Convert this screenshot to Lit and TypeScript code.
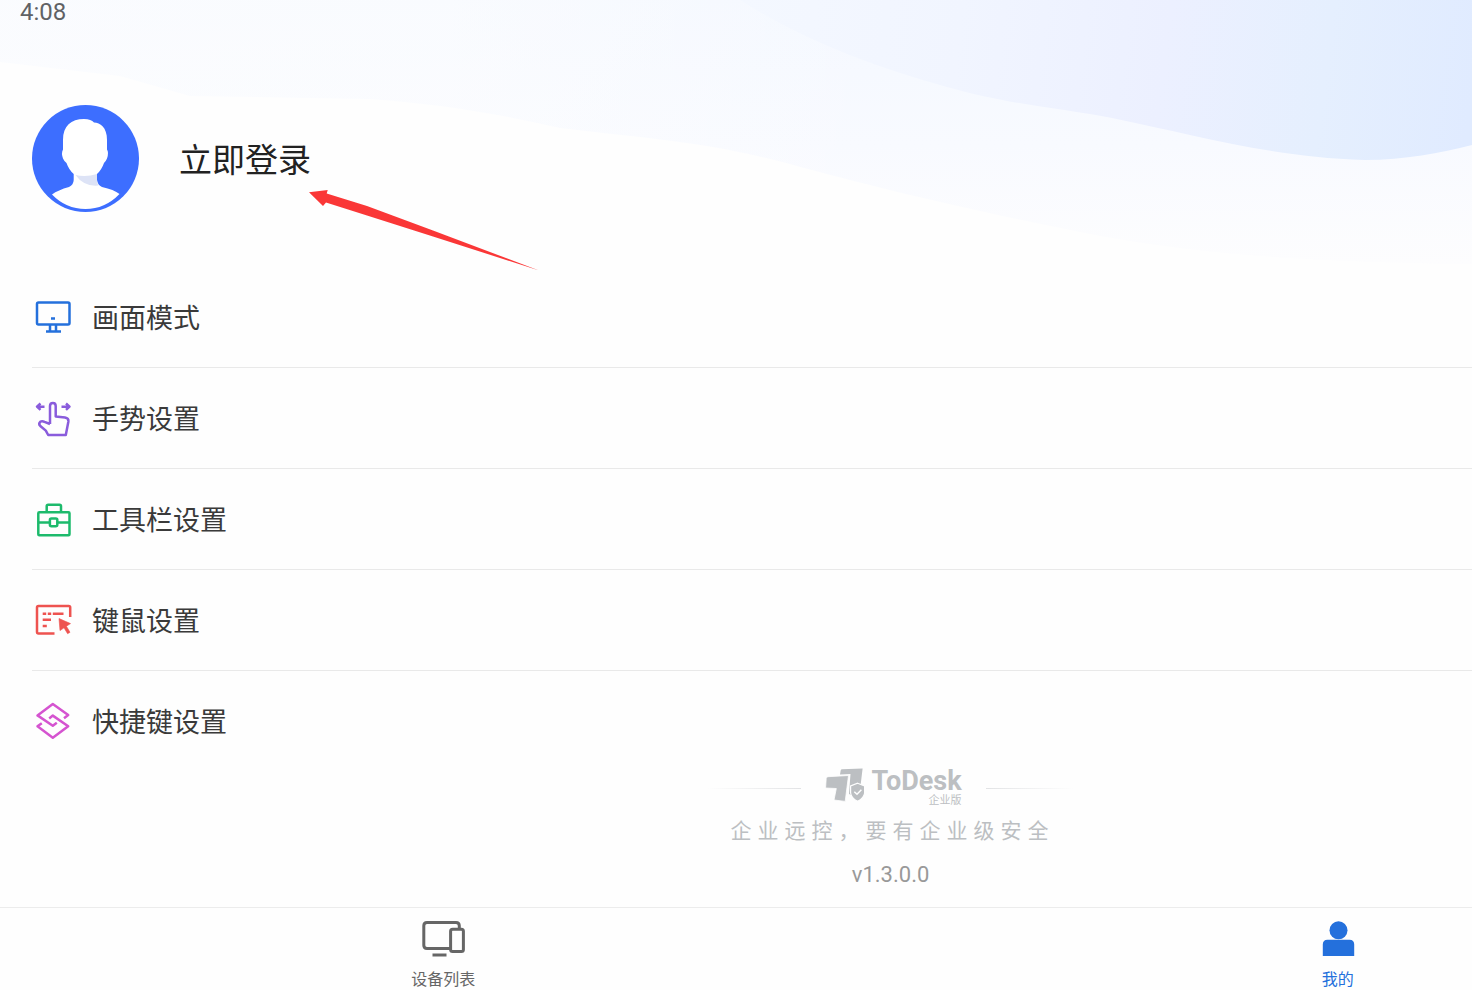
import { LitElement, html, css, svg } from "lit";
import { customElement, state } from "lit/decorators.js";

const menuItems = [
  {
    label: "画面模式",
    color: "#2470dc",
    icon: svg`<rect x="5" y="6.5" width="32.5" height="22" rx="1.5"/>
      <path d="M18 28.5V35M24 28.5V35M14 35.5H29M19 22.5H23"/>`,
  },
  {
    label: "手势设置",
    color: "#8a5cdc",
    icon: svg`<path d="M12.5 9.7H5.5M8.500 6.500L5 9.7L8.500 12.900M29.5 9.7H37M34 6.500L37.5 9.7L34 12.900"/>
      <path d="M18 27V9Q18 6 20.9 6Q23.7 6 23.7 9V19.5L33 20.6Q36.8 21.2 36.4 24.5L33.8 38H16.2L13.8 33.6L8.3 29Q6.2 26.7 8.2 24.8Q10 23.6 12.5 24.8L18 27"/>`,
  },
  {
    label: "工具栏设置",
    color: "#1dba6c",
    icon: svg`<rect x="6.3" y="14.3" width="31.2" height="23" rx="1"/>
      <path d="M14.7 14V8.2Q14.7 6.7 16.2 6.7H27.5Q29 6.7 29 8.2V14M6.3 24.5H17.7M25.3 24.5H37.5"/>
      <rect x="17.9" y="20.5" width="7.4" height="7.8" rx="1.5"/>`,
  },
  {
    label: "键鼠设置",
    color: "#ee5350",
    icon: svg`<path d="M38.2 18V8.5Q38.2 7 36.7 7H6.5Q5 7 5 8.5V33Q5 34.5 6.5 34.5H22.5M10.7 14.7H14.2M15.8 14.7H19.2M20.8 14.7H31.5M10.7 20.7H19M10.7 27H14.8"/>
      <path d="M27 19.5L38.5 24.6L34.4 27.2L38 33.3L35.6 34.7L32 28.8L28 31.6Z" fill="currentColor" stroke-width="0.6"/>`,
  },
  {
    label: "快捷键设置",
    color: "#d554d0",
    icon: svg`<path d="M32 18.2L36.2 15L20.8 4L5.5 15.4L20.8 25.8L24.8 22.8"/>
      <path d="M9.8 23.2L5.5 26.3L20.8 37.8L36.2 26.3L20.8 15.6L17.2 18.4"/>`,
  },
];

@customElement("app-root")
export class AppRoot extends LitElement {
  static styles = css`
    :host {
      display: block;
      position: relative;
      overflow: hidden;
      min-height: 100vh;
      background: #fefefe;
      font-family: Roboto, "Noto Sans CJK SC", sans-serif;
      color: #333;
    }
    * {
      box-sizing: border-box;
    }
    button {
      margin: 0;
      padding: 0;
      border: 0;
      background: none;
      font: inherit;
      color: inherit;
      text-align: left;
      cursor: pointer;
    }
    svg {
      display: block;
      flex: none;
    }
    .waves {
      position: absolute;
      top: 0;
      left: 0;
      width: 100%;
      height: 270px;
    }
    .screen {
      position: relative;
      display: flex;
      flex-direction: column;
      width: 121%;
      min-height: 100vh;
    }
    .status {
      padding-left: 20px;
      font-size: 24px;
      line-height: 24px;
      color: #606265;
    }
    .profile {
      padding: 81px 32px 55px;
    }
    .login {
      position: relative;
      display: flex;
      align-items: center;
      gap: 40px;
      font-size: 33px;
      line-height: 48px;
      color: #222;
    }
    .login-label {
      padding-top: 5px;
    }
    .pointer {
      position: absolute;
      left: 276px;
      top: 84px;
    }
    .menu {
      margin: 0;
      padding: 0 0 0 32px;
      list-style: none;
    }
    .menu li + li {
      border-top: 1px solid #e9e9e9;
    }
    .row {
      display: flex;
      align-items: center;
      gap: 18px;
      width: 100%;
      padding: 29px 0;
      font-size: 27px;
      line-height: 38px;
    }
    .menu li:last-child .row {
      padding-bottom: 0;
    }
    .row svg {
      fill: none;
      stroke: currentColor;
      stroke-width: 2.5;
      stroke-linejoin: round;
    }
    .row-label {
      padding-top: 4px;
      color: #3a3a3a;
    }
    .about {
      display: flex;
      flex-direction: column;
      align-items: center;
      margin-top: auto;
      padding: 20px 0 19px;
      color: #bcbfc2;
    }
    .brand {
      display: flex;
      align-items: center;
      gap: 24px;
    }
    .rule {
      width: 94px;
      height: 1px;
      background: linear-gradient(90deg, transparent, #e2e3e5);
    }
    .rule.end {
      width: 88px;
      background: linear-gradient(270deg, transparent, #e2e3e5);
    }
    .logo {
      display: flex;
      align-items: flex-start;
      gap: 6px;
    }
    .name {
      display: flex;
      flex-direction: column;
      align-items: flex-end;
    }
    .product {
      font-size: 27px;
      line-height: 26px;
      font-weight: 700;
    }
    .edition {
      font-size: 11px;
      line-height: 14px;
    }
    .tagline {
      margin: 8px 0 16px;
      font-size: 21px;
      line-height: 30px;
      letter-spacing: 6px;
      text-indent: 4px;
    }
    .version {
      font-size: 22px;
      line-height: 26px;
      color: #999;
    }
    .tabs {
      display: grid;
      grid-template-columns: 1fr 1fr;
      gap: 8px;
      padding-top: 11px;
      border-top: 1px solid #ececec;
    }
    .tab {
      display: flex;
      flex-direction: column;
      align-items: center;
      gap: 10px;
      font-size: 16px;
      line-height: 21px;
      color: #666;
    }
    .tab.active {
      color: #2470dc;
    }
  `;

  @state() private tab = "mine";

  private waves() {
    return html`<svg class="waves" viewBox="0 0 1472 270" preserveAspectRatio="none" aria-hidden="true">
      <defs>
        <linearGradient id="haze" x1="0" y1="0" x2="0" y2="1">
          <stop offset="0" stop-color="#f4f8ff"/>
          <stop offset="0.55" stop-color="#f8faff"/>
          <stop offset="1" stop-color="#fdfdfe"/>
        </linearGradient>
        <linearGradient id="fade" x1="0" y1="0" x2="1" y2="0">
          <stop offset="0" stop-color="#fefefe" stop-opacity="0.6"/>
          <stop offset="0.5" stop-color="#fefefe" stop-opacity="0.5"/>
          <stop offset="1" stop-color="#fefefe" stop-opacity="0"/>
        </linearGradient>
        <linearGradient id="sky" gradientUnits="userSpaceOnUse" x1="740" y1="0" x2="1472" y2="90">
          <stop offset="0" stop-color="#f4f8ff"/>
          <stop offset="0.3" stop-color="#f1f5ff"/>
          <stop offset="0.58" stop-color="#ecf0ff"/>
          <stop offset="0.8" stop-color="#e5effe"/>
          <stop offset="1" stop-color="#e0ebff"/>
        </linearGradient>
      </defs>
      <path fill="url(#haze)" d="M0 0H1472V264C1290 262 1180 252 1080 232C960 208 870 186 790 164C700 140 640 138 560 128C500 114 440 104 370 99L190 96L120 76L0 62Z"/>
      <path fill="url(#fade)" d="M0 0H900V200L0 110Z"/>
      <path fill="url(#sky)" d="M740 0C800 38 870 66 947 87C1010 105 1060 108 1112 118C1200 136 1270 157 1365 160C1405 160 1440 153 1472 145V0Z"/>
    </svg>`;
  }

  private avatar() {
    return html`<svg width="107" height="107" viewBox="0 0 107 107" aria-hidden="true">
      <circle cx="53.5" cy="53.5" r="53.5" fill="#3d6eff"/>
      <path fill="#fff" d="M52 14C57 14 60 15.4 62 17.4C68 17.6 75 22 75 35V44.5Q77 47.500 75 53.500Q74 56 72 58Q69.500 65 65 69V75Q65.500 80 70 82Q82 84.500 87.500 89Q73 104 53.500 104Q34 104 20 89.500Q26 85 37 82Q41.500 80 41.700 75V69Q37 65 34.500 58Q32 56 31 53.500Q29 48 31 44.500V35C31 21 39 14 52 14Z"/>
      <path fill="#dde3f6" d="M43.500 70Q54 72.500 65 69V75Q65 78.500 66.500 80.500Q52 82 43.500 70Z"/>
    </svg>`;
  }

  render() {
    return html`
      ${this.waves()}
      <div class="screen">
        <div class="status">4:08</div>
        <header class="profile">
          <button class="login">
            ${this.avatar()}
            <span class="login-label">立即登录</span>
            <svg class="pointer" width="232" height="82" viewBox="0 0 232 82" aria-hidden="true">
              <path fill="#fa3737" d="M1 3.300L19.700 1L18.700 4.500L59 17L125 41.500L231 81.500L125 47.500L59 26.500L18 13.500L15 17Z"/>
            </svg>
          </button>
        </header>
        <ul class="menu">
          ${menuItems.map(
            (item) => html`<li>
              <button class="row">
                <svg width="42" height="42" viewBox="0 0 42 42" color=${item.color} aria-hidden="true">${item.icon}</svg>
                <span class="row-label">${item.label}</span>
              </button>
            </li>`
          )}
        </ul>
        <footer class="about">
          <div class="brand">
            <span class="rule"></span>
            <div class="logo">
              <svg width="40" height="36" viewBox="0 0 40 36" aria-hidden="true">
                <path fill="currentColor" d="M17 1.200L37.600 0.500L35.500 18L33 30L24 26L25.500 6L15 6.500L15.700 2.400Q16 1.200 17 1.200Z"/>
                <path fill="currentColor" stroke="#fefefe" stroke-width="0.8" d="M3 8.700L23.500 7.500L20.200 33.400L9 32L11.300 20.500L0.600 20L1.200 10.300Q1.400 8.800 3 8.700Z"/>
                <path fill="currentColor" stroke="#fefefe" stroke-width="1.200" d="M32.600 15.200L39.600 18V25Q39 30 32.600 33.400Q26.200 30 25.600 25V18Z"/>
                <path fill="none" stroke="#fefefe" stroke-width="1.500" d="M29.300 23.800L32 26.300L36.400 21.800"/>
              </svg>
              <div class="name">
                <span class="product">ToDesk</span>
                <span class="edition">企业版</span>
              </div>
            </div>
            <span class="rule end"></span>
          </div>
          <div class="tagline">企业远控，要有企业级安全</div>
          <div class="version">v1.3.0.0</div>
        </footer>
        <nav class="tabs">
          <button class="tab ${this.tab === "devices" ? "active" : ""}" @click=${() => (this.tab = "devices")}>
            <svg width="44" height="40" viewBox="0 0 44 40" fill="none" stroke="currentColor" stroke-width="3" aria-hidden="true">
              <path d="M29.500 29.500H6Q2.800 29.500 2.800 26.300V6.700Q2.800 3.500 6 3.500H35Q38.300 3.500 38.300 6.700V10M11.500 36H25.500"/>
              <rect x="29.600" y="10.300" width="12.800" height="22.200" rx="2"/>
            </svg>
            <span>设备列表</span>
          </button>
          <button class="tab ${this.tab === "mine" ? "active" : ""}" @click=${() => (this.tab = "mine")}>
            <svg width="44" height="40" viewBox="0 0 44 40" fill="currentColor" aria-hidden="true">
              <circle cx="22.500" cy="11.300" r="9"/>
              <path d="M6.800 37V25.500Q6.800 20.800 11.500 20.800H33.500Q38.200 20.800 38.200 25.500V37Z"/>
            </svg>
            <span>我的</span>
          </button>
        </nav>
      </div>
    `;
  }
}
